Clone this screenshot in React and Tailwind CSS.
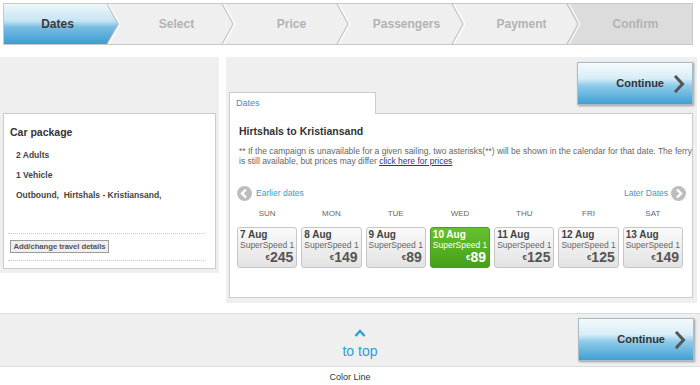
import React from "react";

const Sep = () => (
  <svg className="absolute top-0 -right-[3px] z-10" width="16" height="40" viewBox="0 0 16 40">
    <polyline points="1,0 12,20 1,40" fill="none" stroke="#bdbdbd" strokeWidth="1" />
    <polyline points="3,0 14,20 3,40" fill="none" stroke="#ffffff" strokeWidth="1" />
  </svg>
);

const Chevron = ({ color = "#555" }) => (
  <svg width="11" height="18" viewBox="0 0 11 18">
    <polyline points="2,2 8.5,9 2,16" fill="none" stroke={color} strokeWidth="3" strokeLinecap="square" />
  </svg>
);

const ContinueBtn = () => (
  <div className="w-[116px] h-[43px] border border-[#a9bcc7] shadow-[1px_1px_2px_rgba(0,0,0,0.35)] bg-[linear-gradient(to_bottom,#f4fafd_0%,#d8edf7_38%,#8fcbea_55%,#3fa0d3_100%)] flex items-center justify-end pr-[7px] gap-[10px]">
    <span className="text-[11px] font-bold text-[#333]">Continue</span>
    <Chevron />
  </div>
);

const NavCircle = ({ dir }) => (
  <svg width="15" height="15" viewBox="0 0 15 15">
    <circle cx="7.5" cy="7.5" r="7.5" fill="#bdbdbd" />
    {dir === "left" ? (
      <polyline points="9,3.5 5,7.5 9,11.5" fill="none" stroke="#fff" strokeWidth="2.4" />
    ) : (
      <polyline points="6,3.5 10,7.5 6,11.5" fill="none" stroke="#fff" strokeWidth="2.4" />
    )}
  </svg>
);

const days = [
  { d: "SUN", date: "7 Aug", price: "245" },
  { d: "MON", date: "8 Aug", price: "149" },
  { d: "TUE", date: "9 Aug", price: "89" },
  { d: "WED", date: "10 Aug", price: "89", sel: true },
  { d: "THU", date: "11 Aug", price: "125" },
  { d: "FRI", date: "12 Aug", price: "125" },
  { d: "SAT", date: "13 Aug", price: "149" },
];

export default function App() {
  return (
    <div className="w-[700px] h-[385px] bg-white overflow-hidden font-['Liberation_Sans',Arial,sans-serif]">
      {/* progress bar */}
      <div className="pt-[3px] pl-[3px]">
        <div className="flex w-[690px] h-[42px] border border-[#c9c9c9] bg-[#efefef]">
          <div className="relative w-[115px] h-full">
            <div className="h-full flex items-center justify-center pr-[8px] text-[12px] font-bold text-[#3a3a3a] bg-[linear-gradient(to_bottom,#eef8fc_0%,#c6e4f3_42%,#78bde2_58%,#3b9dd1_100%)] [clip-path:polygon(0_0,calc(100%_-_12px)_0,100%_50%,calc(100%_-_12px)_100%,0_100%)]">
              Dates
            </div>
            <Sep />
          </div>
          {["Select", "Price", "Passengers", "Payment"].map((s) => (
            <div key={s} className="relative w-[115px] h-full flex items-center justify-center text-[12px] font-bold text-[#b3b3b3]">
              {s}
              <Sep />
            </div>
          ))}
          <div className="w-[126px] -ml-[13px] h-full bg-[#dcdcdc] [clip-path:polygon(0_0,100%_0,100%_100%,0_100%,13px_50%)] flex items-center justify-center pl-[13px] text-[12px] font-bold text-[#b3b3b3]">
            Confirm
          </div>
        </div>
      </div>

      {/* main */}
      <div className="flex items-start mt-[12px] gap-[7px]">
        {/* left */}
        <div className="w-[219px] bg-[#efefef] pt-[56px] pl-[3px] pr-[3px] pb-[4px]">
          <div className="h-[156px] bg-white border border-[#cccccc] pt-[12px]">
            <div className="pl-[6px] text-[10.5px] leading-[13px] font-bold text-[#333]">Car package</div>
            <div className="pl-[12px] mt-[10px] flex flex-col gap-[8px] text-[8.5px] leading-[12px] font-bold text-[#444]">
              <div>2 Adults</div>
              <div>1 Vehicle</div>
              <div>Outbound,&nbsp; Hirtshals - Kristiansand,</div>
            </div>
            <div className="ml-[4px] w-[196px] mt-[32px] border-t border-dotted border-[#c8c8c8]" />
            <div className="ml-[6px] mt-[6px] w-[99px] h-[13px] border border-[#9a9a9a] bg-[#efefef] flex items-center justify-center text-[7.8px] font-bold text-[#555] whitespace-nowrap tracking-[-0.1px]">
              Add/change travel details
            </div>
            <div className="ml-[4px] w-[196px] mt-[7px] border-t border-dotted border-[#c8c8c8]" />
          </div>
        </div>

        {/* right */}
        <div className="w-[471px] bg-[#efefef] pt-[5px] pb-[5px] pl-[3px] pr-[4px]">
          <div className="flex items-end h-[51px]">
            <div className="relative z-10 -mb-px w-[147px] h-[22px] bg-white border border-b-0 border-[#cccccc] pl-[6px] pt-[4px] text-[9px] text-[#3b8fc4]">
              Dates
            </div>
            <div className="ml-auto self-start">
              <ContinueBtn />
            </div>
          </div>
          <div className="h-[185px] bg-white border border-[#cccccc]">
            <div className="pl-[9px] pt-[11px] text-[10.5px] leading-[13px] font-bold text-[#333]">Hirtshals to Kristiansand</div>
            <div className="pl-[9px] mt-[8px] text-[8.5px] leading-[10px] text-[#666] whitespace-nowrap">
              ** If the campaign is unavailable for a given sailing, two asterisks(**) will be shown in the calendar for that date. The ferry
              <br />
              is still available, but prices may differ <span className="underline text-[#33338a]">click here for prices</span>
            </div>
            <div className="mt-[20px] pl-[7px] pr-[6px] flex items-center">
              <NavCircle dir="left" />
              <span className="ml-[4px] text-[8.5px] text-[#3a9ad0]">Earlier dates</span>
              <span className="ml-auto mr-[3px] text-[8.5px] text-[#3a9ad0]">Later Dates</span>
              <NavCircle dir="right" />
            </div>
            <div className="ml-[7px] w-[446px] mt-[8px] grid grid-cols-7 gap-x-[4px]">
              {days.map((x) => (
                <div key={x.d} className="text-center text-[8px] leading-[10px] text-[#666]">{x.d}</div>
              ))}
            </div>
            <div className="ml-[7px] w-[446px] mt-[8px] grid grid-cols-7 gap-x-[4px]">
              {days.map((x) => (
                <div
                  key={x.date}
                  className={
                    x.sel
                      ? "h-[41px] rounded-[3px] border border-[#4d9a24] bg-[linear-gradient(to_bottom,#66c22f,#45a019)] pt-[1px] px-[2px] text-white"
                      : "h-[41px] rounded-[3px] border border-[#c6c6c6] bg-[linear-gradient(to_bottom,#fafafa,#e3e3e3)] pt-[1px] px-[2px]"
                  }
                >
                  <div className={"text-[10px] leading-[11px] font-bold " + (x.sel ? "text-white" : "text-[#444]")}>{x.date}</div>
                  <div className={"text-[8.5px] leading-[10px] whitespace-nowrap " + (x.sel ? "text-white" : "text-[#666]")}>SuperSpeed 1</div>
                  <div className={"pr-[1px] text-right text-[14px] leading-[14px] font-bold " + (x.sel ? "text-white" : "text-[#555]")}>
                    <span className="text-[8px] align-top relative top-[1px]">€</span>
                    {x.price}
                  </div>
                </div>
              ))}
            </div>
          </div>
        </div>
      </div>

      {/* bottom bar */}
      <div className="mt-[10px] h-[54px] border-y border-[#dcdcdc] bg-[#efefef] flex items-start">
        <div className="ml-[336px] w-[48px] pt-[15px] flex flex-col items-center">
          <svg width="12" height="8" viewBox="0 0 12 8">
            <polyline points="1.5,7 6,2 10.5,7" fill="none" stroke="#2a9fd6" strokeWidth="2.4" />
          </svg>
          <div className="mt-[6px] text-[14px] leading-[16px] text-[#2a9fd6]">to top</div>
        </div>
        <div className="ml-auto mr-[6px] mt-[4px]">
          <ContinueBtn />
        </div>
      </div>

      <div className="mt-[5px] text-center text-[9px] leading-[11px] text-[#333]">Color Line</div>
    </div>
  );
}
